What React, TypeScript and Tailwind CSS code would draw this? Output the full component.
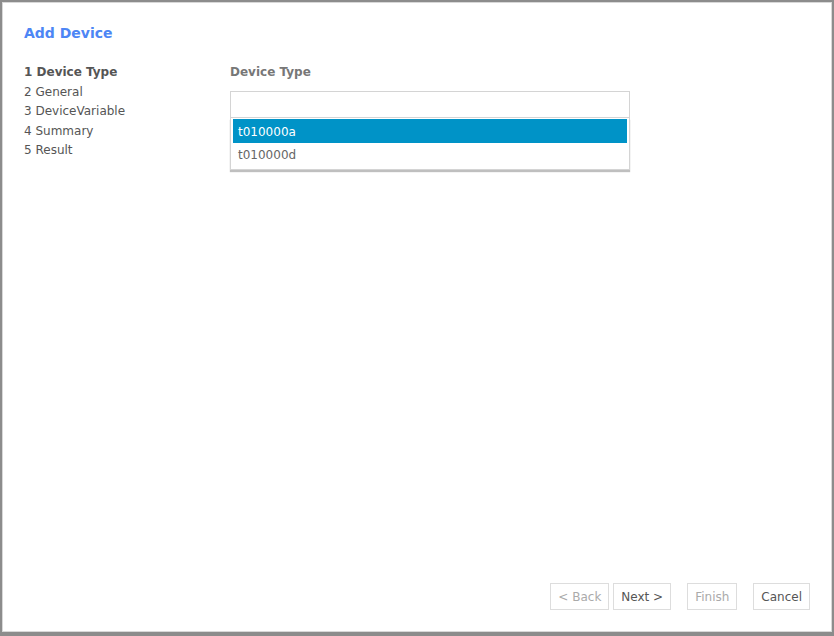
const steps = ['1 Device Type', '2 General', '3 DeviceVariable', '4 Summary', '5 Result'];

export default function App() {
  return (
    <div
      className="w-[834px] h-[636px] bg-white flex flex-col border-t-[2px] border-l-[2px] border-r-[2px] border-b-[4px] border-[#8c8c8c] text-[#555]"
      style={{ fontFamily: '"DejaVu Sans", Verdana, sans-serif' }}
    >
      <div className="flex-1 flex flex-col border border-[#d8d8d8]">
        <div className="pl-[21px] pt-[21px] text-[14px] font-bold text-[#4d86f5] leading-[18px]">Add Device</div>
        <div className="flex flex-1 pt-[21px]">
          <div className="w-[227px] pl-[21px] flex flex-col text-[12px] leading-[19.5px]">
            {steps.map((s, i) => (
              <div key={s} className={i === 0 ? 'font-bold text-[#555]' : 'text-[#555]'}>
                {s}
              </div>
            ))}
          </div>
          <div className="flex flex-col w-[400px]">
            <div className="text-[12px] font-bold text-[#777] leading-[19.5px]">Device Type</div>
            <div className="mt-[8px] h-[27px] border border-[#d4d4d4] bg-white" />
            <div className="border-x border-b border-[#d4d4d4] shadow-[0_2px_1px_rgba(0,0,0,0.25)] px-[2px] pt-[1px] pb-[3px] text-[12px]">
              <div className="h-[24px] bg-[#0093c7] text-white flex items-center pl-[5px] pt-[2px]">t010000a</div>
              <div className="h-[23px] flex items-center pl-[5px] pt-[2px] text-[#666]">t010000d</div>
            </div>
          </div>
        </div>
        <div className="flex justify-end items-center pr-[21px] pb-[21px] text-[12px]">
          <button className="h-[27px] px-[7px] border border-[#ddd] text-[#aaa] bg-white">&lt; Back</button>
          <button className="ml-[4px] h-[27px] px-[7px] border border-[#ddd] text-[#555] bg-white">Next &gt;</button>
          <button className="ml-[16px] h-[27px] px-[7px] border border-[#ddd] text-[#aaa] bg-white">Finish</button>
          <button className="ml-[16px] h-[27px] px-[7px] border border-[#ddd] text-[#555] bg-white">Cancel</button>
        </div>
      </div>
    </div>
  );
}
